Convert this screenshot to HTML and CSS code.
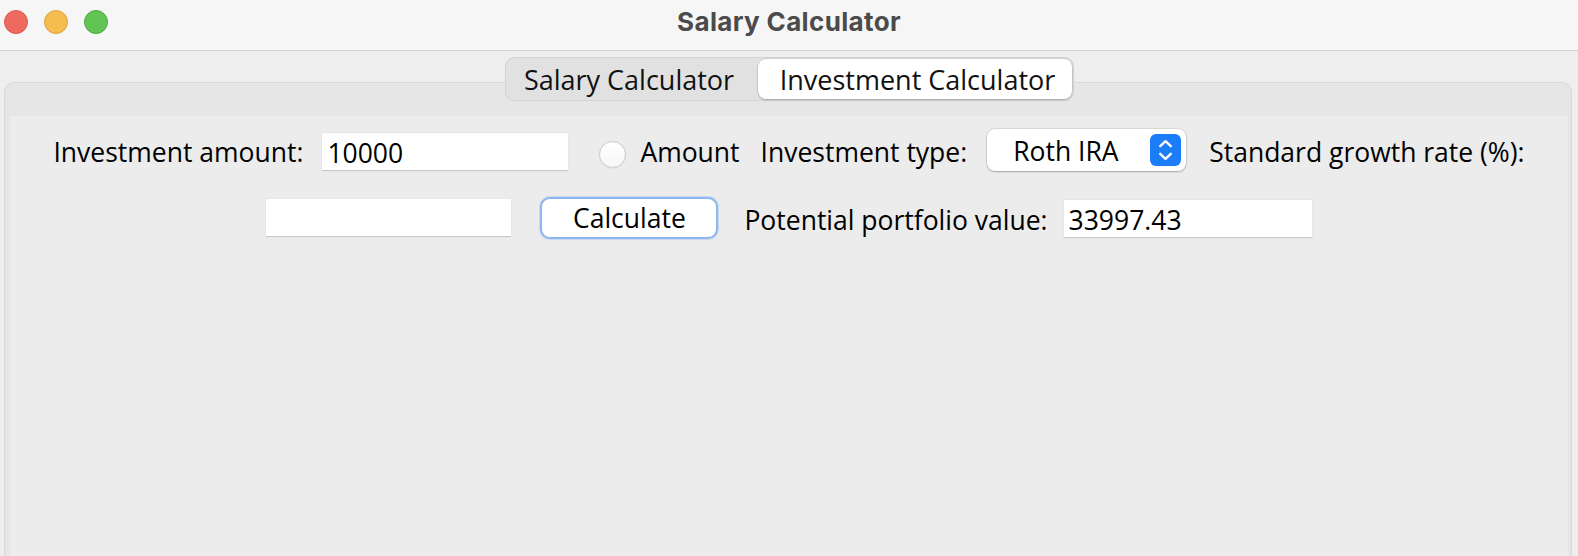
FILE: index.html
```html
<!DOCTYPE html>
<html lang="en">
<head>
<meta charset="utf-8">
<title>Salary Calculator</title>
<link rel="stylesheet" href="styles.css">
</head>
<body>
<div class="window">
  <div class="titlebar">
    <div class="lights">
      <span class="light red"></span>
      <span class="light yellow"></span>
      <span class="light green"></span>
    </div>
    <div class="title">Salary Calculator</div>
    <div></div>
  </div>
  <div class="main">
    <div class="tabs">
      <div class="tab tab-salary">Salary Calculator</div>
      <div class="tab tab-invest">Investment Calculator</div>
    </div>
    <div class="panel">
      <div class="content">
        <div class="row row1">
          <span class="label">Investment amount:</span>
          <input class="field field-amount" type="text" value="10000">
          <span class="radio"></span>
          <span class="label label-amount">Amount</span>
          <span class="label label-type">Investment type:</span>
          <div class="select">
            <span class="select-text">Roth IRA</span>
            <svg class="select-arrows" width="31" height="32" viewBox="0 0 31 32">
              <rect x="0" y="0" width="31" height="32" rx="6" fill="#1c7df8"/>
              <path d="M10.2 12.2 L15.5 7.2 L20.8 12.2" fill="none" stroke="#fff" stroke-width="2.3" stroke-linecap="round" stroke-linejoin="round"/>
              <path d="M10.2 19.8 L15.5 24.8 L20.8 19.8" fill="none" stroke="#fff" stroke-width="2.3" stroke-linecap="round" stroke-linejoin="round"/>
            </svg>
          </div>
          <span class="label label-rate">Standard growth rate (%):</span>
        </div>
        <div class="row row2">
          <input class="field field-rate" type="text" value="">
          <button class="btn">Calculate</button>
          <span class="label label-value">Potential portfolio value:</span>
          <input class="field field-value" type="text" value="33997.43">
        </div>
      </div>
    </div>
  </div>
</div>
</body>
</html>
```
FILE: styles.css
```css
html, body {
  margin: 0;
  padding: 0;
}
body {
  width: 1578px;
  height: 556px;
  overflow: hidden;
  font-family: "Open Sans", "DejaVu Sans", sans-serif;
  background: #eeeeee;
}
.window {
  display: flex;
  flex-direction: column;
  height: 556px;
  background: #eeeeee;
}
.titlebar {
  height: 50px;
  flex: none;
  background: #f6f6f6;
  border-bottom: 1px solid #d2d2d2;
  display: grid;
  grid-template-columns: 1fr auto 1fr;
  align-items: start;
}
.lights {
  display: flex;
  gap: 16px;
  padding: 10px 0 0 4px;
}
.light {
  width: 24px;
  height: 24px;
  border-radius: 50%;
  box-sizing: border-box;
  border: 1px solid;
}
.red { background: #ee6a5f; border-color: #d9574c; }
.yellow { background: #f5bd4f; border-color: #dda23a; }
.green { background: #61c454; border-color: #4caa3f; }
.title {
  font-family: Inter, "Open Sans", sans-serif;
  font-weight: 700;
  font-size: 26px;
  line-height: 30px;
  margin-top: 7px;
  color: #4b4b4b;
  letter-spacing: 0.35px;
}
.main {
  flex: 1;
  display: flex;
  flex-direction: column;
  padding-top: 6px;
  min-height: 0;
}
.tabs {
  align-self: center;
  display: flex;
  padding: 1px;
  border: 1px solid #d4d4d4;
  border-radius: 9px;
  background: #e1e1e1;
  position: relative;
  z-index: 1;
  margin-bottom: -19px;
}
.tab {
  height: 40px;
  display: flex;
  align-items: center;
  justify-content: center;
  font-size: 27px;
  color: #111;
  border-radius: 8px;
  white-space: nowrap;
}
.tab-salary { width: 251px; padding-right: 6px; box-sizing: border-box; }
.tab-invest {
  width: 314px;
  box-sizing: border-box;
  padding-left: 6px;
  background: #ffffff;
  box-shadow: 0 1px 2px rgba(0, 0, 0, 0.22), 0 0 0 0.5px rgba(0, 0, 0, 0.12);
}
.panel {
  flex: 1;
  display: flex;
  margin: 0 6px 0 4px;
  border: 1px solid #d9d9d9;
  border-bottom: none;
  border-radius: 10px 10px 0 0;
  background: #e6e6e6;
  padding: 33px 3px 0 5px;
}
.content {
  flex: 1;
  display: flex;
  flex-direction: column;
  background: #ececec;
}
.row {
  display: flex;
  justify-content: center;
  align-items: center;
  height: 42px;
}
.row1 { margin-top: 13px; }
.row2 { margin-top: 26px; }
.label {
  font-size: 26.5px;
  color: #000;
  white-space: nowrap;
  padding-top: 4px;
}
.field {
  box-sizing: border-box;
  height: 38px;
  border: none;
  border-bottom: 1px solid #c9c9c9;
  box-shadow: 0 0 0 0.5px #e2e2e2;
  background: #ffffff;
  font-family: "Open Sans", "DejaVu Sans", sans-serif;
  font-size: 26.5px;
  color: #000;
  padding: 2px 5px 0;
  outline: none;
  margin: 0;
}
.field-amount { width: 246px; margin-left: 19px; margin-top: 4px; }
.radio {
  width: 27px;
  height: 27px;
  box-sizing: border-box;
  border-radius: 50%;
  border: 1px solid #c9c9c9;
  background: linear-gradient(#ffffff, #f7f7f7);
  box-shadow: 0 0.5px 1px rgba(0, 0, 0, 0.08);
  margin-left: 31px;
  margin-top: 8px;
}
.label-amount { margin-left: 14px; }
.label-type { margin-left: 21px; }
.select {
  width: 199px;
  height: 42px;
  box-sizing: border-box;
  margin-left: 20px;
  background: #ffffff;
  border-radius: 8px;
  box-shadow: 0 0 0 0.5px rgba(0, 0, 0, 0.14), 0 1px 2px rgba(0, 0, 0, 0.25);
  display: flex;
  align-items: center;
  padding: 0 5px 0 26px;
}
.select-text {
  flex: 1;
  font-size: 26.5px;
  color: #000;
  white-space: nowrap;
  padding-top: 2px;
}
.select-arrows {
  flex: none;
  display: block;
}
.label-rate { margin-left: 23px; }
.field-rate { width: 245px; }
.btn {
  width: 178px;
  height: 42px;
  box-sizing: border-box;
  margin: 0 0 0 29px;
  padding: 0;
  border: 2px solid #8cb8ef;
  border-radius: 10px;
  box-shadow: 0 0 0 1px rgba(140, 184, 239, 0.35);
  background: #ffffff;
  font-family: "Open Sans", "DejaVu Sans", sans-serif;
  font-size: 26.5px;
  color: #000;
}
.label-value { margin-left: 26px; }
.field-value { width: 248px; margin-left: 16px; margin-top: 2px; }
```
